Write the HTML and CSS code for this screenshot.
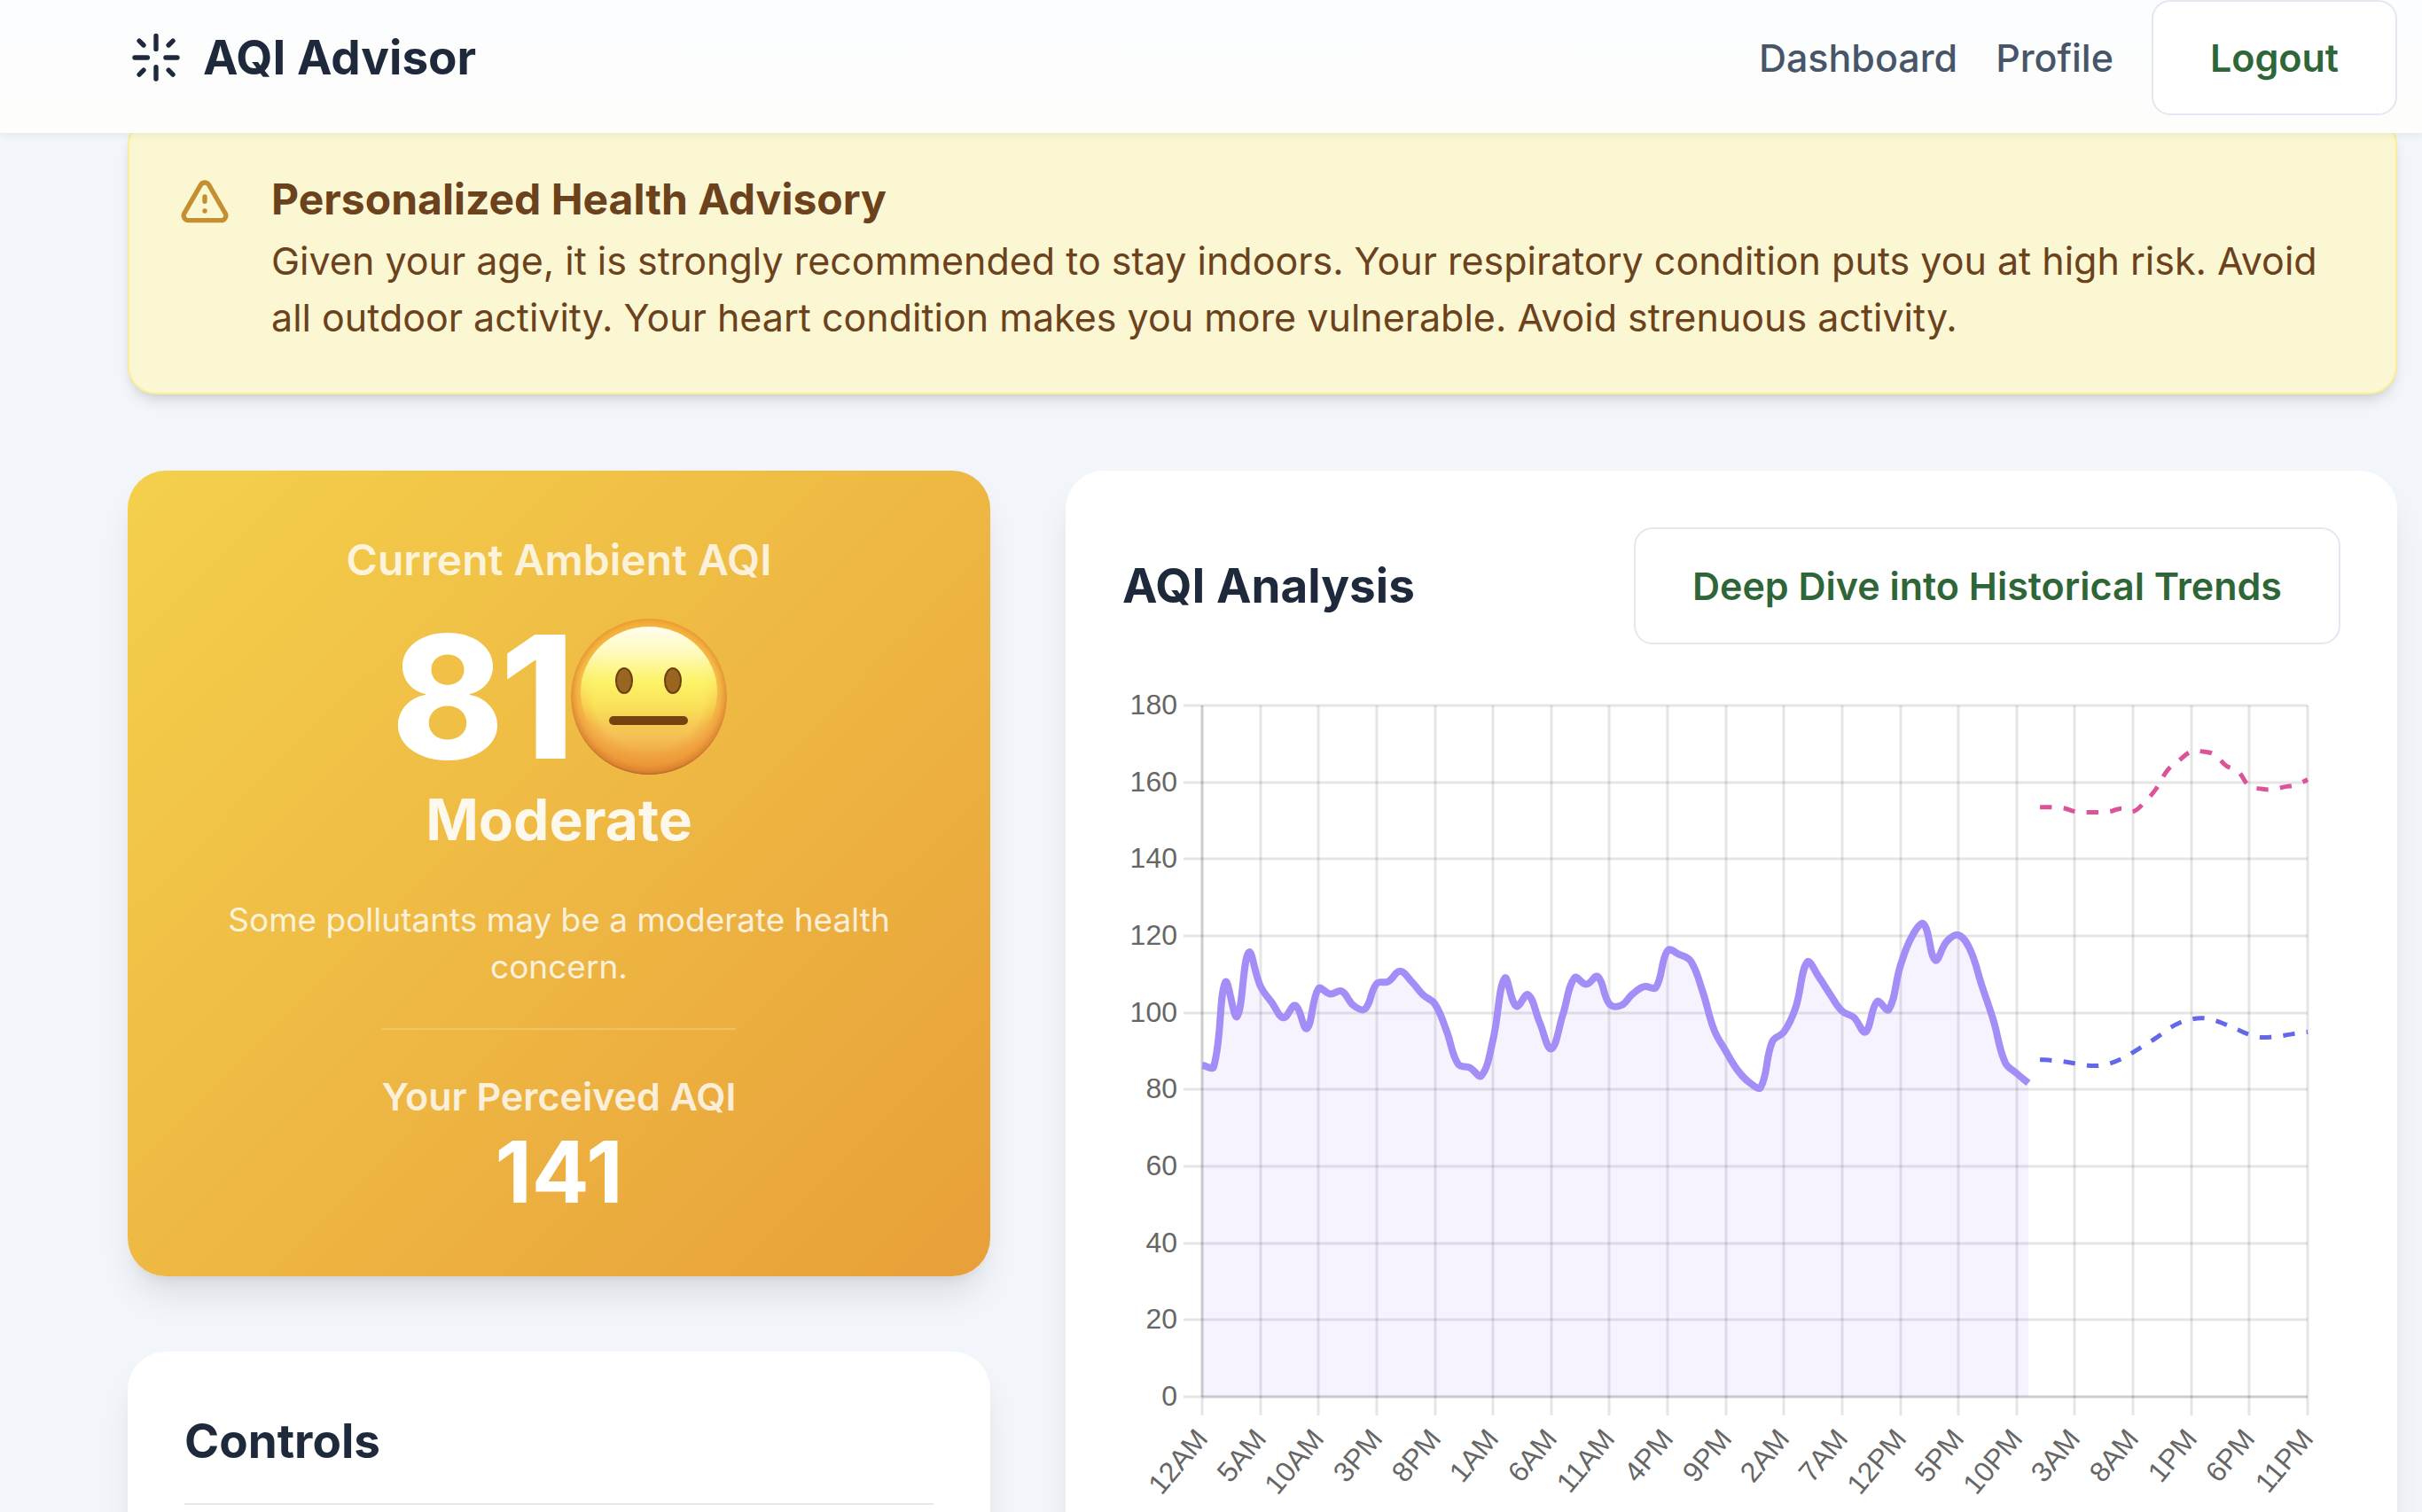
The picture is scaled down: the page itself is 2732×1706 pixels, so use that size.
FILE: index.html
```html
<!DOCTYPE html>
<html lang="en">
<head>
<meta charset="utf-8">
<meta name="viewport" content="width=device-width, initial-scale=1">
<title>AQI Advisor</title>
<link rel="stylesheet" href="styles.css">
</head>
<body>
<header class="topbar">
  <a class="brand" href="#">
    <svg class="icon" viewBox="0 0 24 24" fill="none" stroke="currentColor" stroke-width="2" stroke-linecap="round" aria-hidden="true">
      <path d="M12 2.800v5.600M12 16v5M3 12h5.400M16.100 12H21M4.900 4.900l1.850 1.850M19.150 4.900l-1.850 1.850M4.900 19.150l1.850-1.850M19.150 19.150l-1.850-1.850"/>
    </svg>
    <span>AQI Advisor</span>
  </a>
  <nav class="nav">
    <a href="#">Dashboard</a>
    <a href="#">Profile</a>
    <button class="button" type="button">Logout</button>
  </nav>
</header>

<main class="page">
  <section class="advisory">
    <svg class="icon advisory-icon" viewBox="0 0 24 24" fill="none" stroke="currentColor" stroke-width="2" stroke-linecap="round" stroke-linejoin="round" aria-hidden="true">
      <path d="M12 9v2m0 4h.01m-6.938 4h13.856c1.540 0 2.502-1.667 1.732-3L13.732 4c-.770-1.333-2.694-1.333-3.464 0L3.340 16c-.770 1.333.192 3 1.732 3z"/>
    </svg>
    <div>
      <h2 class="advisory-title">Personalized Health Advisory</h2>
      <p class="advisory-text">Given your age, it is strongly recommended to stay indoors. Your respiratory condition puts you at high risk. Avoid all outdoor activity. Your heart condition makes you more vulnerable. Avoid strenuous activity.</p>
    </div>
  </section>

  <div class="grid">
    <div class="side">
      <section class="aqi-card">
        <h3 class="aqi-label">Current Ambient AQI</h3>
        <div class="aqi-value">
          <span>81</span>
          <svg class="face" viewBox="0 0 176 176" role="img" aria-label="Neutral face">
            <defs>
              <linearGradient id="skin" x1="0" y1="0" x2="0" y2="1">
                <stop offset="0" stop-color="#f6c93c"/>
                <stop offset=".35" stop-color="#fcec58"/>
                <stop offset=".55" stop-color="#f9dc55"/>
                <stop offset=".75" stop-color="#f5c055"/>
                <stop offset=".92" stop-color="#eea23e"/>
                <stop offset="1" stop-color="#d58630"/>
              </linearGradient>
              <radialGradient id="rim" cx=".5" cy=".48" r=".52">
                <stop offset=".68" stop-color="#ee9335" stop-opacity="0"/>
                <stop offset=".88" stop-color="#ee9335" stop-opacity=".6"/>
                <stop offset=".97" stop-color="#d9812f" stop-opacity=".9"/>
                <stop offset="1" stop-color="#b5652a"/>
              </radialGradient>
              <linearGradient id="shine" x1="0" y1="0" x2="0" y2="1">
                <stop offset="0" stop-color="#fffdee"/>
                <stop offset=".2" stop-color="#fefabc"/>
                <stop offset=".42" stop-color="#fdf46c" stop-opacity=".85"/>
                <stop offset=".75" stop-color="#fbe455" stop-opacity="0"/>
              </linearGradient>
            </defs>
            <circle cx="88" cy="88" r="88" fill="url(#skin)"/>
            <circle cx="88" cy="88" r="88" fill="url(#rim)"/>
            <ellipse cx="88" cy="83" rx="77" ry="74" fill="url(#shine)"/>
            <ellipse cx="60" cy="70" rx="9" ry="14" fill="#99651f" stroke="#6b3f12" stroke-width="2"/>
            <ellipse cx="115" cy="70" rx="9" ry="14" fill="#99651f" stroke="#6b3f12" stroke-width="2"/>
            <rect x="43" y="110" width="89" height="10" rx="5" fill="#744410"/>
          </svg>
        </div>
        <p class="aqi-level">Moderate</p>
        <p class="aqi-note">Some pollutants may be a moderate health concern.</p>
        <div class="perceived">
          <h4 class="perceived-label">Your Perceived AQI</h4>
          <p class="perceived-value">141</p>
        </div>
      </section>
      <section class="card">
        <h3 class="card-title controls-title">Controls</h3>
      </section>
    </div>

    <section class="card">
      <div class="card-head">
        <h3 class="card-title">AQI Analysis</h3>
        <button class="button" type="button">Deep Dive into Historical Trends</button>
      </div>
      <svg class="chart" id="chart" viewBox="0 0 1374 950" role="img" aria-label="AQI history and forecast"></svg>
    </section>
  </div>
</main>
<script src="chart.js"></script>
</body>
</html>
```
FILE: styles.css
```css
* {
  box-sizing: border-box;
  margin: 0;
}

body {
  background: #f2f5fa;
  color: #1e293b;
  font-family: Inter, "Liberation Sans", sans-serif;
  font-size: 43px;
  line-height: 64px;
}

.topbar {
  position: sticky;
  top: 0;
  z-index: 2;
  display: flex;
  align-items: center;
  justify-content: space-between;
  padding: 0 28px 20px 144px;
  background: linear-gradient(#fcfdff, #fdfdfb);
  box-shadow: 0 3px 8px rgba(0, 0, 0, 0.06);
}

.icon {
  flex: none;
  width: 64px;
  height: 64px;
}

.brand {
  display: flex;
  align-items: center;
  gap: 21px;
  color: #1e293b;
  font-size: 53px;
  font-weight: 700;
  text-decoration: none;
}

.nav {
  display: flex;
  align-items: center;
  gap: 43px;
}

.nav a {
  color: #475569;
  font-weight: 500;
  text-decoration: none;
}

.button {
  padding: 32px 64px;
  border: 2px solid #e2e8f0;
  border-radius: 21px;
  background: #fff;
  color: #2f6637;
  font: inherit;
  font-weight: 600;
}

.nav .button {
  padding-top: 31px;
  padding-bottom: 31px;
}

.page {
  padding: 0 28px 85px 144px;
}

.advisory {
  display: flex;
  gap: 43px;
  margin-top: -18px;
  margin-bottom: 86px;
  padding: 53px;
  border: 2px solid #fbef96;
  border-radius: 32px;
  background: #fcf7d3;
  color: #6b421c;
  box-shadow: 0 11px 16px -3px rgba(0, 0, 0, 0.1), 0 5px 11px -5px rgba(0, 0, 0, 0.1);
}

.advisory-icon {
  margin-top: 11px;
  color: #c48f30;
}

.advisory-title {
  font-size: 48px;
  font-weight: 700;
  line-height: 75px;
}

.grid {
  display: grid;
  grid-template-columns: 973fr 1502fr;
  gap: 85px;
  align-items: start;
}

.side {
  display: grid;
  gap: 85px;
}

.card,
.aqi-card {
  padding: 64px;
  border-radius: 43px;
  box-shadow: 0 27px 40px -8px rgba(0, 0, 0, 0.1), 0 11px 16px -11px rgba(0, 0, 0, 0.1);
}

.card {
  background: #fff;
}

.card-head {
  display: flex;
  align-items: center;
  justify-content: space-between;
  margin-bottom: 43px;
}

.card-title {
  font-size: 53px;
  font-weight: 700;
  line-height: 75px;
}

.controls-title {
  padding-bottom: 32px;
  border-bottom: 2px solid #e5e7eb;
}

.aqi-card {
  display: flex;
  flex-direction: column;
  align-items: center;
  background: linear-gradient(135deg, #f4d04b, #eeb843 50%, #e89f39);
  color: #fff;
  text-align: center;
}

.aqi-label {
  font-size: 48px;
  font-weight: 600;
  line-height: 74px;
  opacity: 0.8;
}

.aqi-value {
  display: flex;
  align-items: center;
  margin-top: 21px;
  font-size: 192px;
  font-weight: 800;
  line-height: 192px;
  letter-spacing: -0.025em;
}

.face {
  width: 176px;
  height: 176px;
}

.aqi-level {
  font-size: 64px;
  font-weight: 700;
  line-height: 86px;
  opacity: 0.9;
}

.aqi-note {
  margin-top: 43px;
  font-size: 37px;
  line-height: 53px;
  opacity: 0.8;
}

.perceived {
  margin-top: 43px;
  padding-top: 43px;
  border-top: 2px solid rgba(255, 255, 255, 0.2);
}

.perceived-label {
  font-weight: 600;
  opacity: 0.8;
}

.perceived-value {
  font-size: 96px;
  font-weight: 700;
  line-height: 107px;
}

.chart {
  display: block;
  width: 100%;
  height: auto;
  font-family: "Liberation Sans", sans-serif;
  font-size: 32px;
  fill: #666;
}

.grid-line {
  stroke: rgba(0, 0, 0, 0.1);
  stroke-width: 3;
}

.history-area {
  fill: rgba(139, 92, 246, 0.08);
}

.history-line,
.forecast,
.perceived-forecast {
  fill: none;
}

.history-line {
  stroke: #a48df6;
  stroke-width: 8;
}

.forecast,
.perceived-forecast {
  stroke-width: 5;
  stroke-dasharray: 13.3 13.3;
}

.forecast {
  stroke: #6367ea;
}

.perceived-forecast {
  stroke: #db5398;
}
```
FILE: chart.js
```js
const history = [86.3, 86, 108, 99, 115.7, 107, 102.6, 98.7, 101.9, 95.9, 106.3, 104.9,
  105.6, 101.9, 101, 107.6, 108.1, 110.8, 108.1, 104.6, 102.3, 95.3, 86.6, 85.7,
  83.6, 93, 109, 101.7, 104.7, 97.5, 90.6, 99.5, 109.1, 107.4, 109.4, 102.3,
  101.9, 104.9, 106.8, 106.6, 116.2, 115.2, 113.4, 105.6, 95.5, 90, 85.1, 81.9,
  80.6, 92.5, 95, 101.3, 113.2, 109.3, 104.6, 100.4, 98.8, 95, 102.9, 100.8,
  112.2, 119.9, 123.1, 113.7, 118.6, 120.2, 116.4, 107.1, 98, 87.1, 84.2, 81.7];
const forecast = [87.8, 87.6, 87.3, 86.8, 86.3, 86.2, 86.8, 88, 89.7, 91.6, 93.5, 95.7,
  97.4, 98.3, 98.6, 98, 96.9, 95.6, 94.3, 93.6, 93.7, 94.1, 94.6, 95];
const perceived = [153.5, 153.5, 153.3, 152.4, 152.2, 152.2, 152.4, 153.2, 152.4, 154.9, 158.4, 163.3,
  165.8, 168, 168, 167.2, 164.3, 162.9, 159, 158.3, 158.1, 158.8, 159.3, 160.7];

const LEFT = 90, RIGHT = 1337, TOP = 26, BOTTOM = 806, HOURS = 95, MAX = 180;
const px = hour => LEFT + hour * (RIGHT - LEFT) / HOURS;
const py = value => BOTTOM - value * (BOTTOM - TOP) / MAX;

// Cubic spline through the values; the handles scale with the distance to each neighbour.
function curve(values, start) {
  const pts = values.map((v, i) => [px(start + i), py(v)]);
  const handles = pts.map((p, i) => {
    const a = pts[Math.max(i - 1, 0)], b = pts[Math.min(i + 1, pts.length - 1)];
    const da = Math.hypot(p[0] - a[0], p[1] - a[1]), db = Math.hypot(b[0] - p[0], b[1] - p[1]);
    const fa = 0.4 * da / (da + db), fb = 0.4 * db / (da + db);
    return {
      before: [p[0] - fa * (b[0] - a[0]), p[1] - fa * (b[1] - a[1])],
      after: [p[0] + fb * (b[0] - a[0]), p[1] + fb * (b[1] - a[1])]
    };
  });
  return pts.map((p, i) => i === 0 ? `M${p}` : `C${handles[i - 1].after} ${handles[i].before} ${p}`).join('');
}

const parts = [];
const line = (x1, y1, x2, y2) => parts.push(`<line class="grid-line" x1="${x1}" y1="${y1}" x2="${x2}" y2="${y2}"/>`);

for (let v = 0; v <= MAX; v += 20) {
  const y = Math.round(py(v));
  line(LEFT - 21, y, RIGHT, y);
  parts.push(`<text x="62" y="${y + 10}" text-anchor="end">${v}</text>`);
}
for (let h = 0; h <= HOURS; h += 5) {
  const x = Math.round(px(h));
  line(x, TOP, x, BOTTOM + 21);
  const label = `${h % 12 || 12}${h % 24 < 12 ? 'AM' : 'PM'}`;
  parts.push(`<text transform="translate(${x + 8} ${BOTTOM + 48}) rotate(-50)" text-anchor="end">${label}</text>`);
}
line(LEFT, TOP, LEFT, BOTTOM);
line(LEFT, BOTTOM, RIGHT, BOTTOM);

const past = curve(history, 0);
parts.push(`<path class="history-area" d="${past}V${BOTTOM}H${LEFT}Z"/>`);
parts.push(`<path class="history-line" d="${past}"/>`);
parts.push(`<path class="forecast" d="${curve(forecast, history.length)}"/>`);
parts.push(`<path class="perceived-forecast" d="${curve(perceived, history.length)}"/>`);
document.getElementById('chart').innerHTML = parts.join('');
```
